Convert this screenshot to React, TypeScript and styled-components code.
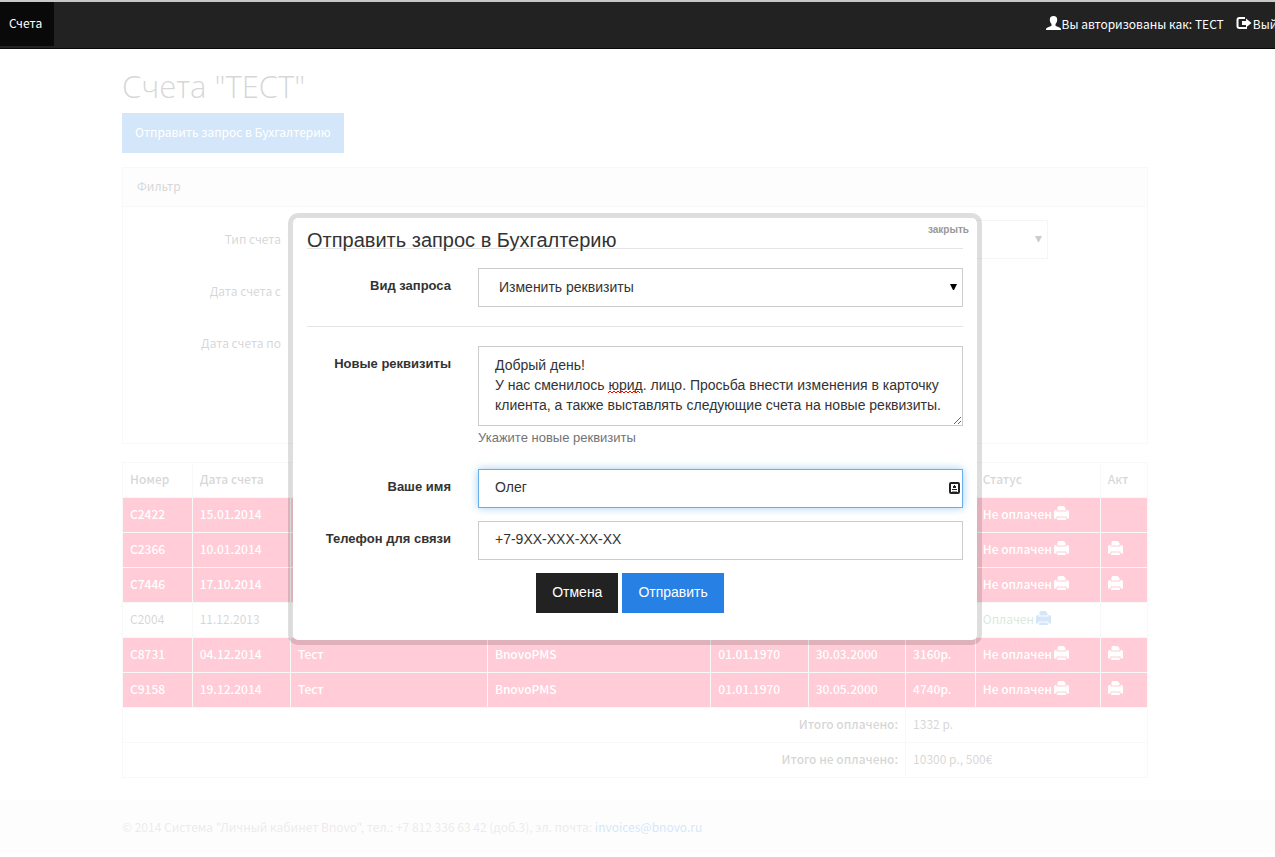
import React from "react";
import styled, { createGlobalStyle } from "styled-components";

const uiFont = '"Noto Sans CJK SC", "Noto Sans", sans-serif';
const formFont = '"Liberation Sans", Arial, sans-serif';

const GlobalStyle = createGlobalStyle`
  *, *::before, *::after { box-sizing: border-box; }
  body {
    margin: 0;
    background: #fff;
    color: #333;
    font: 12px/20px ${uiFont};
    overflow-x: hidden;
  }
  button, input, select, textarea { font: inherit; color: inherit; margin: 0; }
`;

const Screen = styled.div`
  position: relative;
  min-height: 100vh;
`;

/* Navigation */
const Navbar = styled.header`
  position: relative;
  z-index: 3;
  display: flex;
  justify-content: space-between;
  height: 49px;
  overflow: hidden;
  background: #222;
  border-top: 2px solid #c8c8c8;
  border-bottom: 1px solid #090909;
  color: #fff;
`;

const NavTab = styled.a`
  height: 44px;
  padding: 11px 12px 13px 9px;
  background: #090909;
  color: #fff;
  text-decoration: none;
`;

const NavUser = styled.div`
  display: flex;
  flex: none;
  gap: 12px;
  padding-top: 12px;
  margin-right: -16px;
`;

const NavItem = styled.span`
  display: flex;
  gap: 1px;
  color: #fff;
  white-space: nowrap;
  svg { margin-top: 2px; }
`;

const NavLink = styled(NavItem).attrs({ as: "a" })<{ href: string }>`
  text-decoration: none;
`;

/* Page */
const Container = styled.div`
  padding: 0 127px 0 122px;
`;

const Title = styled.h1`
  margin: 0 0 10px;
  padding-top: 20px;
  font: 300 31px/34px "Open Sans", "Noto Sans", sans-serif;
`;

const Button = styled.button<{ $primary?: boolean }>`
  height: 40px;
  padding: 0 16px 2px;
  border: 0;
  background: ${(p) => (p.$primary ? "#2780e3" : "#222")};
  color: #fff;
  white-space: nowrap;
`;

const PageButton = styled(Button)`
  display: block;
  padding: 0 13px 2px;
`;

const Panel = styled.section`
  margin-top: 14px;
  height: 277px;
  border: 1px solid #ddd;
`;

const PanelHeading = styled.h2`
  margin: 0;
  height: 39px;
  padding: 8px 14px;
  background: #f5f5f5;
  border-bottom: 1px solid #ddd;
  font-size: 12px;
  font-weight: 400;
  line-height: 20px;
`;

const FilterForm = styled.form`
  display: grid;
  gap: 13px;
  padding-top: 13px;
`;

const FilterRow = styled.div`
  display: grid;
  grid-template-columns: 158px minmax(0, 1fr);
  gap: 26px;
  min-height: 39px;
  padding-right: 99px;
  align-items: center;
`;

const FilterLabel = styled.label`
  padding-bottom: 2px;
  text-align: right;
`;

const SelectShell = styled.div`
  display: grid;
  align-items: center;
  > * { grid-area: 1 / 1; }
  > svg { justify-self: end; margin-right: 6px; pointer-events: none; }
`;

const Select = styled.select`
  appearance: none;
  width: 100%;
  height: 39px;
  padding: 0 20px 2px;
  border: 1px solid #ccc;
  border-radius: 0;
  background: #fff;
  outline: 0;
`;

/* Invoices */
const Table = styled.table`
  width: 100%;
  margin-top: 18px;
  border-collapse: collapse;
  table-layout: fixed;
`;

const Col = styled.col<{ $share: number }>`
  width: ${(p) => p.$share}%;
`;

const cellBox = `
  height: 35px;
  padding: 0 7px 2px;
  border: 1px solid #ddd;
  text-align: left;
  white-space: nowrap;
`;

const Th = styled.th`
  ${cellBox}
  font-weight: 500;
`;

const Td = styled.td<{ $right?: boolean }>`
  ${cellBox}
  ${(p) => p.$right && "text-align: right;"}
  svg { vertical-align: -1px; }
`;

const TotalLabel = styled.span`
  font-weight: 500;
`;

const Row = styled.tr<{ $unpaid: boolean }>`
  ${(p) => p.$unpaid && "background: #ff0039; color: #fff; font-weight: 500;"}
`;

const Status = styled.span<{ $paid: boolean }>`
  margin-right: 2px;
  ${(p) => p.$paid && "color: #468847;"}
`;

const PrintLink = styled.a<{ $paid?: boolean }>`
  color: ${(p) => (p.$paid ? "#2780e3" : "#fff")};
`;

const Footer = styled.footer`
  margin-top: 22px;
  padding: 17px 127px 17px 122px;
  background: #f5f5f5;
  color: #999;
  a { color: #2780e3; text-decoration: none; }
`;

/* Dialog */
const Veil = styled.div`
  position: absolute;
  inset: 0;
  z-index: 2;
  background: rgba(255, 255, 255, 0.8);
`;

const DialogLayer = styled.div`
  position: absolute;
  inset: 0;
  z-index: 4;
  display: flex;
  justify-content: center;
  align-items: flex-start;
  padding: 213px 5px 0 0;
  pointer-events: none;
`;

const Dialog = styled.div`
  position: relative;
  width: 694px;
  height: 432px;
  padding: 15px 14px;
  border: 5px solid rgba(0, 0, 0, 0.13);
  border-radius: 10px;
  background: #fff;
  background-clip: padding-box;
  font: 14px/20px ${formFont};
  pointer-events: auto;
`;

const CloseButton = styled.button`
  position: absolute;
  top: 4px;
  right: 8px;
  padding: 0;
  border: 0;
  background: none;
  color: #999;
  font: bold 10px/16px ${formFont};
`;

const DialogTitle = styled.h2`
  height: 16px;
  margin: 0 0 19px;
  border-bottom: 1px solid #e5e5e5;
  font-size: 20px;
  font-weight: 400;
  line-height: 15px;
`;

const Divider = styled.hr`
  margin: 19px 0;
  border: 0;
  border-top: 1px solid #e5e5e5;
`;

const Field = styled.div`
  display: grid;
  grid-template-columns: 144px minmax(0, 1fr);
  column-gap: 27px;
  margin-bottom: 13px;
`;

const Label = styled.label`
  padding-top: 8px;
  text-align: right;
  font-size: 13px;
  font-weight: 700;
`;

const Control = styled.div`
  position: relative;
`;

const Input = styled.input`
  display: block;
  width: 100%;
  height: 39px;
  padding: 0 16px 3px;
  border: 1px solid #ccc;
  outline: 0;
  background: #fff;
`;

const ActiveInput = styled(Input)`
  border-color: #66afe9;
  box-shadow: 0 0 8px rgba(102, 175, 233, 0.6);
`;

const TextArea = styled.textarea`
  display: block;
  width: 100%;
  height: 80px;
  padding: 8px 16px;
  border: 1px solid #ccc;
  outline: 0;
  resize: vertical;
  overflow: hidden;
`;

const Squiggle = styled.svg`
  position: absolute;
  top: 44px;
  left: 130px;
  pointer-events: none;
`;

const CardIcon = styled.svg`
  position: absolute;
  top: 13px;
  right: 3px;
`;

const Help = styled.p`
  margin: 2px 0 8px;
  color: #737373;
  font-size: 13px;
`;

const Actions = styled.div`
  display: flex;
  justify-content: center;
  gap: 4px;
  padding-right: 10px;
`;

const UserIcon = () => (
  <svg width="15" height="14" viewBox="0 0 15 14" fill="currentColor" aria-hidden="true">
    <path d="M7.500 0C5 0 3.700 1.500 3.800 4c.1 1.900.8 3.100 1.700 3.900v1.300c0 .5-.4.8-1 1.100L1.500 11.500C.5 12 0 12.500 0 13.300V14h15v-.7c0-.8-.5-1.300-1.500-1.800l-3-1.200c-.6-.3-1-.6-1-1.100V7.900c.9-.8 1.600-2 1.700-3.900C11.300 1.500 10 0 7.500 0z" />
  </svg>
);

const LogoutIcon = () => (
  <svg width="16" height="14" viewBox="0 0 16 14" aria-hidden="true">
    <path d="M9 2H3.500Q1.500 2 1.500 4v6q0 2 2 2H10V11" fill="none" stroke="currentColor" strokeWidth="2" />
    <path d="M10 2.500 15.500 7 10 11.500V9H6V5h4z" fill="currentColor" />
  </svg>
);

const PrinterIcon = () => (
  <svg width="15" height="14" viewBox="0 0 15 14" fill="currentColor" aria-hidden="true">
    <path d="M4.500 0h5L11.500 2v2.500h-8V1.500z" />
    <path d="M1 4h1.500v1.500h10V4H14l1 1.500V12.500h-2.500v-2h-10v2H0V5.500z" />
    <path d="M3.500 11.500h8l.5 2.500H3z" />
  </svg>
);

const Arrow = () => (
  <svg width="7" height="7" viewBox="0 0 7 7" aria-hidden="true">
    <path d="M0 0h7L4 6H3z" fill="#000" />
  </svg>
);

const shares = [6.8, 9.6, 19.2, 21.8, 9.5, 9.5, 6.8, 12.2, 4.6];

type Invoice = { id: string; date: string; cells: string[]; paid?: boolean; act?: boolean };

const hidden = ["", "", "", "", ""];
const invoices: Invoice[] = [
  { id: "С2422", date: "15.01.2014", cells: hidden },
  { id: "С2366", date: "10.01.2014", cells: hidden, act: true },
  { id: "С7446", date: "17.10.2014", cells: hidden, act: true },
  { id: "С2004", date: "11.12.2013", cells: hidden, paid: true },
  { id: "С8731", date: "04.12.2014", cells: ["Тест", "BnovoPMS", "01.01.1970", "30.03.2000", "3160р."], act: true },
  { id: "С9158", date: "19.12.2014", cells: ["Тест", "BnovoPMS", "01.01.1970", "30.05.2000", "4740р."], act: true },
];

const message =
  "Добрый день!\nУ нас сменилось юрид. лицо. Просьба внести изменения в карточку клиента, а также выставлять следующие счета на новые реквизиты.";

function InvoiceTable() {
  return (
    <Table>
      <colgroup>
        {shares.map((share, i) => <Col key={i} $share={share} />)}
      </colgroup>
      <thead>
        <tr>
          {["Номер", "Дата счета", ...hidden, "Статус", "Акт"].map((name, i) => <Th key={i}>{name}</Th>)}
        </tr>
      </thead>
      <tbody>
        {invoices.map((inv) => (
          <Row key={inv.id} $unpaid={!inv.paid}>
            <Td>{inv.id}</Td>
            <Td>{inv.date}</Td>
            {inv.cells.map((text, i) => <Td key={i}>{text}</Td>)}
            <Td>
              <Status $paid={!!inv.paid}>{inv.paid ? "Оплачен" : "Не оплачен"}</Status>
              <PrintLink href="#" aria-label="Печать счета" $paid={inv.paid}><PrinterIcon /></PrintLink>
            </Td>
            <Td>{inv.act && <PrintLink href="#" aria-label="Печать акта"><PrinterIcon /></PrintLink>}</Td>
          </Row>
        ))}
        <tr>
          <Td colSpan={6} $right><TotalLabel>Итого оплачено:</TotalLabel></Td>
          <Td colSpan={3}>1332 р.</Td>
        </tr>
        <tr>
          <Td colSpan={6} $right><TotalLabel>Итого не оплачено:</TotalLabel></Td>
          <Td colSpan={3}>10300 р., 500€</Td>
        </tr>
      </tbody>
    </Table>
  );
}

function RequestDialog() {
  return (
    <DialogLayer>
      <Dialog role="dialog" aria-labelledby="dialog-title">
        <CloseButton type="button">закрыть</CloseButton>
        <DialogTitle id="dialog-title">Отправить запрос в Бухгалтерию</DialogTitle>
        <form>
          <Field>
            <Label htmlFor="kind">Вид запроса</Label>
            <SelectShell>
              <Select id="kind"><option>Изменить реквизиты</option></Select>
              <Arrow />
            </SelectShell>
          </Field>
          <Divider />
          <Field>
            <Label htmlFor="details">Новые реквизиты</Label>
            <Control>
              <TextArea id="details" defaultValue={message} spellCheck={false} />
              <Squiggle width="34" height="4" viewBox="0 0 34 4" aria-hidden="true">
                <path d="M0 3l2-2 2 2 2-2 2 2 2-2 2 2 2-2 2 2 2-2 2 2 2-2 2 2 2-2 2 2 2-2 2 2" fill="none" stroke="#f00" />
              </Squiggle>
              <Help>Укажите новые реквизиты</Help>
            </Control>
          </Field>
          <Field>
            <Label htmlFor="name">Ваше имя</Label>
            <Control>
              <ActiveInput id="name" defaultValue="Олег" />
              <CardIcon width="11" height="12" viewBox="0 0 11 12" aria-hidden="true">
                <rect x="1" y="1" width="9" height="10" rx="1" fill="#fff" stroke="#222" strokeWidth="2" />
                <path d="M5 3h1v1h1v2H4V4h1zM3 7h5v1H3z" fill="#222" />
                <path d="M3 9h5v1H3z" fill="#999" />
              </CardIcon>
            </Control>
          </Field>
          <Field>
            <Label htmlFor="phone">Телефон для связи</Label>
            <Input id="phone" type="tel" defaultValue="+7-9XX-XXX-XX-XX" />
          </Field>
          <Actions>
            <Button type="button">Отмена</Button>
            <Button type="submit" $primary>Отправить</Button>
          </Actions>
        </form>
      </Dialog>
    </DialogLayer>
  );
}

export default function App() {
  return (
    <Screen>
      <GlobalStyle />
      <Navbar>
        <NavTab href="#">Счета</NavTab>
        <NavUser>
          <NavItem><UserIcon />Вы авторизованы как: ТЕСТ</NavItem>
          <NavLink href="#"><LogoutIcon />Выйти</NavLink>
        </NavUser>
      </Navbar>
      <Container as="main">
        <Title>Счета "ТЕСТ"</Title>
        <PageButton type="button" $primary>Отправить запрос в Бухгалтерию</PageButton>
        <Panel>
          <PanelHeading>Фильтр</PanelHeading>
          <FilterForm>
            <FilterRow>
              <FilterLabel htmlFor="type">Тип счета</FilterLabel>
              <SelectShell>
                <Select id="type" />
                <Arrow />
              </SelectShell>
            </FilterRow>
            <FilterRow><FilterLabel as="span">Дата счета с</FilterLabel></FilterRow>
            <FilterRow><FilterLabel as="span">Дата счета по</FilterLabel></FilterRow>
          </FilterForm>
        </Panel>
        <InvoiceTable />
      </Container>
      <Footer>
        © 2014 Система "Личный кабинет Bnovo", тел.: +7 812 336 63 42 (доб.3), эл. почта:{" "}
        <a href="mailto:invoices@bnovo.ru">invoices@bnovo.ru</a>
      </Footer>
      <Veil />
      <RequestDialog />
    </Screen>
  );
}
